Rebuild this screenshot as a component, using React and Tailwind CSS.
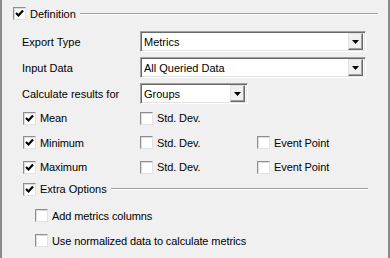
import React from "react";

function Check({ checked }) {
  return (
    <span className="w-[13px] h-[13px] shrink-0 bg-white border border-t-[#8e8e8e] border-l-[#8e8e8e] border-r-[#e3e3e3] border-b-[#e3e3e3] shadow-[inset_1px_1px_0_#dcdcdc] flex items-center justify-center">
      {checked && (
        <svg width="9" height="9" viewBox="0 0 9 9">
          <path d="M1 4 L3.5 6.5 L8 1.5" fill="none" stroke="#000" strokeWidth="2.2" />
        </svg>
      )}
    </span>
  );
}

function Select({ value, width }) {
  return (
    <div className={`${width} h-[21px] bg-white border border-t-[#a0a0a0] border-l-[#a0a0a0] border-r-white border-b-white shadow-[inset_1px_1px_0_#696969,inset_-1px_-1px_0_#e3e3e3] flex items-center pl-[3px] pr-[2px]`}>
      <span className="flex-1 truncate pt-[1px]">{value}</span>
      <span className="w-[15px] h-[17px] bg-[#f0f0f0] border border-t-[#e3e3e3] border-l-[#e3e3e3] border-r-[#696969] border-b-[#696969] shadow-[inset_-1px_-1px_0_#a0a0a0] flex items-center justify-center">
        <svg width="7" height="4" viewBox="0 0 7 4">
          <path d="M0 0 H7 L3.5 4 Z" fill="#000" />
        </svg>
      </span>
    </div>
  );
}

function Option({ checked, label, className = "" }) {
  return (
    <label className={`flex items-center gap-[4px] ${className}`}>
      <Check checked={checked} />
      <span className="pt-[1px] tracking-[-0.1px]">{label}</span>
    </label>
  );
}

function GroupHead({ label, className = "" }) {
  return (
    <div className={`flex items-center ${className}`}>
      <Check checked />
      <span className="ml-[4px] mr-[4px] pt-[1px]">{label}</span>
      <div className="flex-1 h-[2px] border-t border-t-[#a0a0a0] border-b border-b-white" />
    </div>
  );
}

export default function App() {
  return (
    <div
      className="w-[390px] h-[258px] bg-[#f0f0f0] text-[11px] leading-none text-black border-l-2 border-l-[#8a8a8a] border-r-2 border-r-[#8a8a8a] overflow-hidden"
      style={{ fontFamily: '"Liberation Sans", Arial, sans-serif' }}
    >
      <div className="pt-[7px] pl-[11px] pr-[10px]">
        <GroupHead label="Definition" className="h-[13px]" />

        <div className="flex flex-col gap-[5px] mt-[11px] pl-[9px]">
          <div className="flex items-center h-[21px]">
            <span className="w-[118px] pt-[1px]">Export Type</span>
            <Select value="Metrics" width="w-[226px]" />
          </div>
          <div className="flex items-center h-[21px]">
            <span className="w-[118px] pt-[1px]">Input Data</span>
            <Select value="All Queried Data" width="w-[226px]" />
          </div>
          <div className="flex items-center h-[21px]">
            <span className="w-[118px] pt-[1px]">Calculate results for</span>
            <Select value="Groups" width="w-[108px]" />
          </div>
        </div>

        <div className="flex flex-col mt-[2px] pl-[10px]">
          <div className="flex items-center h-[24px]">
            <Option checked label="Mean" className="w-[117px]" />
            <Option label="Std. Dev." className="w-[117px]" />
          </div>
          <div className="flex items-center h-[25px]">
            <Option checked label="Minimum" className="w-[117px]" />
            <Option label="Std. Dev." className="w-[117px]" />
            <Option label="Event Point" />
          </div>
          <div className="flex items-center h-[24px]">
            <Option checked label="Maximum" className="w-[117px]" />
            <Option label="Std. Dev." className="w-[117px]" />
            <Option label="Event Point" />
          </div>
          <GroupHead label="Extra Options" className="h-[20px] pr-[10px]" />
          <div className="flex flex-col mt-[4px] pl-[12px]">
            <Option label="Add metrics columns" className="h-[25px]" />
            <Option label="Use normalized data to calculate metrics" className="h-[25px]" />
          </div>
        </div>
      </div>
    </div>
  );
}
